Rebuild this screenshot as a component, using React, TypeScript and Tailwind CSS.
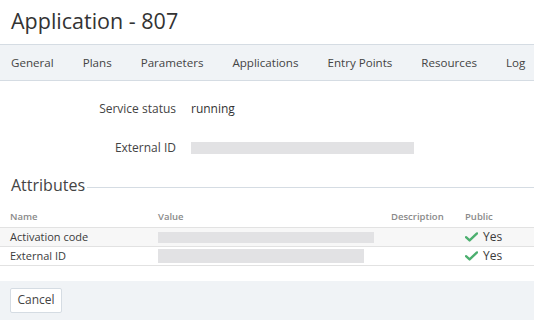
import React from "react";

const Check = () => (
  <svg width="13" height="10" viewBox="0 0 13 10" className="shrink-0">
    <path d="M1 5.2 L4.6 8.4 L12 1.4" fill="none" stroke="#4caf6f" strokeWidth="2.4" strokeLinecap="round" strokeLinejoin="round" />
  </svg>
);

export default function App() {
  const tabs = ["General", "Plans", "Parameters", "Applications", "Entry Points", "Resources", "Log"];
  return (
    <div className="w-[534px] h-[320px] bg-white overflow-hidden text-[#3b3b3b]" style={{ fontFamily: '"Open Sans", sans-serif' }}>
      <div className="h-[44px] pl-[11px] text-[21.5px] leading-[42px] text-[#333]">Application - 807</div>
      <div className="h-[37px] border-y border-[#d5dce3] bg-[#f0f3f6] flex items-center pl-[11px] gap-[29px] text-[11.6px] text-[#444] whitespace-nowrap">
        {tabs.map((t) => (
          <span key={t}>{t}</span>
        ))}
      </div>
      <div className="mt-[8px] text-[12px]">
        <div className="h-[39px] flex items-center">
          <div className="w-[176px] text-right text-[#444]">Service status</div>
          <div className="ml-[15px] text-[#333]">running</div>
        </div>
        <div className="h-[39px] flex items-center">
          <div className="w-[176px] text-right text-[#444]">External ID</div>
          <div className="ml-[15px] w-[223px] h-[12px] bg-[#e2e2e4]" />
        </div>
      </div>
      <div className="mt-[6px] h-[24px] flex items-center pl-[11px]">
        <span className="text-[16px] leading-[24px] text-[#444]">Attributes</span>
        <div className="flex-1 ml-[2px] mt-[5px] h-px bg-[#d5dce3]" />
      </div>
      <div className="text-[11px]">
        <div className="mt-[10px] h-[21px] flex items-center border-b border-[#e2e2e2] text-[9.5px] font-semibold text-[#8a8a8a]">
          <div className="w-[158px] pl-[10px]">Name</div>
          <div className="w-[233px]">Value</div>
          <div className="w-[74px]">Description</div>
          <div>Public</div>
        </div>
        <div className="h-[19px] flex items-center border-b border-[#e2e2e2] bg-[#f7f7f7]">
          <div className="w-[158px] pl-[10px]">Activation code</div>
          <div className="w-[233px]"><div className="w-[216px] h-[11px] bg-[#e2e2e4]" /></div>
          <div className="w-[74px]" />
          <div className="flex items-center gap-[5px] text-[12px]"><Check />Yes</div>
        </div>
        <div className="h-[19px] flex items-center border-b border-[#e2e2e2]">
          <div className="w-[158px] pl-[10px]">External ID</div>
          <div className="w-[233px]"><div className="w-[206px] h-[14px] bg-[#e2e2e4]" /></div>
          <div className="w-[74px]" />
          <div className="flex items-center gap-[5px] text-[12px]"><Check />Yes</div>
        </div>
      </div>
      <div className="mt-[15px] h-[40px] bg-[#f0f3f6] pt-[5px] pl-[10px]">
        <button className="w-[52px] h-[25px] bg-white border border-[#d5dce3] rounded-[2px] text-[12px] text-[#444]">Cancel</button>
      </div>
    </div>
  );
}
